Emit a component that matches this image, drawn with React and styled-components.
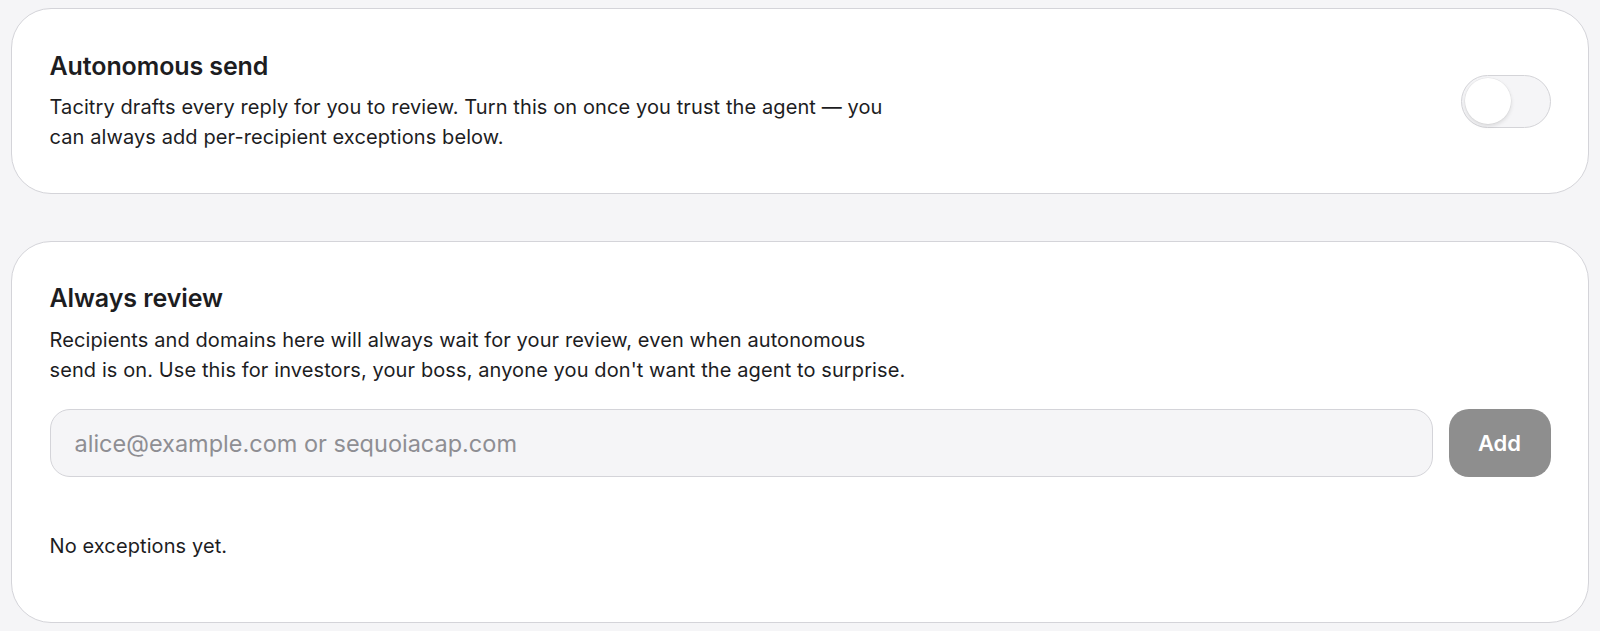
import React, { useState } from "react";
import styled, { createGlobalStyle } from "styled-components";

const GlobalStyle = createGlobalStyle`
  * { box-sizing: border-box; }
  body {
    margin: 0;
    background: #f5f5f7;
    font-family: Inter, "Noto Sans", "Liberation Sans", sans-serif;
    color: #1d1d1f;
    -webkit-font-smoothing: antialiased;
  }
`;

const Page = styled.div`
  display: flex;
  flex-direction: column;
  gap: 47px;
  padding: 8px 11px 9px;
`;

const Card = styled.section`
  background: #ffffff;
  border: 1.5px solid #d4d4d9;
  border-radius: 40px;
  padding: ${(p) => p.$padding || "41.5px 37.5px 40.8px"};
`;

const Row = styled.div`
  display: flex;
  align-items: center;
  justify-content: space-between;
  gap: 24px;
`;

const Title = styled.h2`
  margin: 0 0 11.5px;
  font-size: 25px;
  line-height: 30px;
  font-weight: 600;
  letter-spacing: -0.1px;
`;

const Description = styled.p`
  margin: 0;
  max-width: 858px;
  font-size: 20px;
  line-height: 30px;
  font-weight: 400;
  letter-spacing: 0.1px;
`;

const Track = styled.button`
  flex: none;
  width: 90px;
  height: 53px;
  padding: 0 3px;
  border-radius: 27px;
  border: 1.5px solid #d4d4d8;
  background: ${(p) => (p.$on ? "#34c759" : "#f5f5f7")};
  display: flex;
  align-items: center;
  justify-content: ${(p) => (p.$on ? "flex-end" : "flex-start")};
  cursor: pointer;
`;

const Knob = styled.span`
  width: 46px;
  height: 46px;
  border-radius: 50%;
  background: #ffffff;
  box-shadow: 0 2px 4px rgba(0, 0, 0, 0.12), 0 0 0 0.5px rgba(0, 0, 0, 0.06);
`;

const AddRow = styled.form`
  display: flex;
  gap: 16px;
  margin-top: 24.3px;
`;

const Input = styled.input`
  flex: 1;
  height: 68px;
  padding: 0 24px;
  border: 1.5px solid #d4d4d9;
  border-radius: 20px;
  background: #f5f5f7;
  font-family: inherit;
  font-size: 23.5px;
  color: #1d1d1f;
  outline: none;

  &::placeholder {
    color: #8e8e93;
  }
`;

const AddButton = styled.button`
  flex: none;
  width: 102px;
  height: 68px;
  border: none;
  border-radius: 20px;
  background: #8e8e8e;
  color: #ffffff;
  font-family: inherit;
  font-size: 22px;
  font-weight: 600;
  cursor: pointer;
`;

const Empty = styled.p`
  margin: 53.7px 0 0;
  font-size: 20px;
  line-height: 30px;
  letter-spacing: 0.1px;
`;

export default function App() {
  const [autoSend, setAutoSend] = useState(false);
  const [value, setValue] = useState("");

  return (
    <>
      <GlobalStyle />
      <Page>
        <Card>
          <Row>
            <div>
              <Title>Autonomous send</Title>
              <Description>
                Tacitry drafts every reply for you to review. Turn this on once
                you trust the agent — you can always add per-recipient
                exceptions below.
              </Description>
            </div>
            <Track
              type="button"
              aria-pressed={autoSend}
              $on={autoSend}
              onClick={() => setAutoSend(!autoSend)}
            >
              <Knob />
            </Track>
          </Row>
        </Card>

        <Card $padding="41.5px 37.5px 60.8px">
          <Title>Always review</Title>
          <Description>
            Recipients and domains here will always wait for your review, even
            when autonomous send is on. Use this for investors, your boss,
            anyone you don't want the agent to surprise.
          </Description>
          <AddRow onSubmit={(e) => e.preventDefault()}>
            <Input
              value={value}
              onChange={(e) => setValue(e.target.value)}
              placeholder="alice@example.com or sequoiacap.com"
            />
            <AddButton type="submit">Add</AddButton>
          </AddRow>
          <Empty>No exceptions yet.</Empty>
        </Card>
      </Page>
    </>
  );
}
